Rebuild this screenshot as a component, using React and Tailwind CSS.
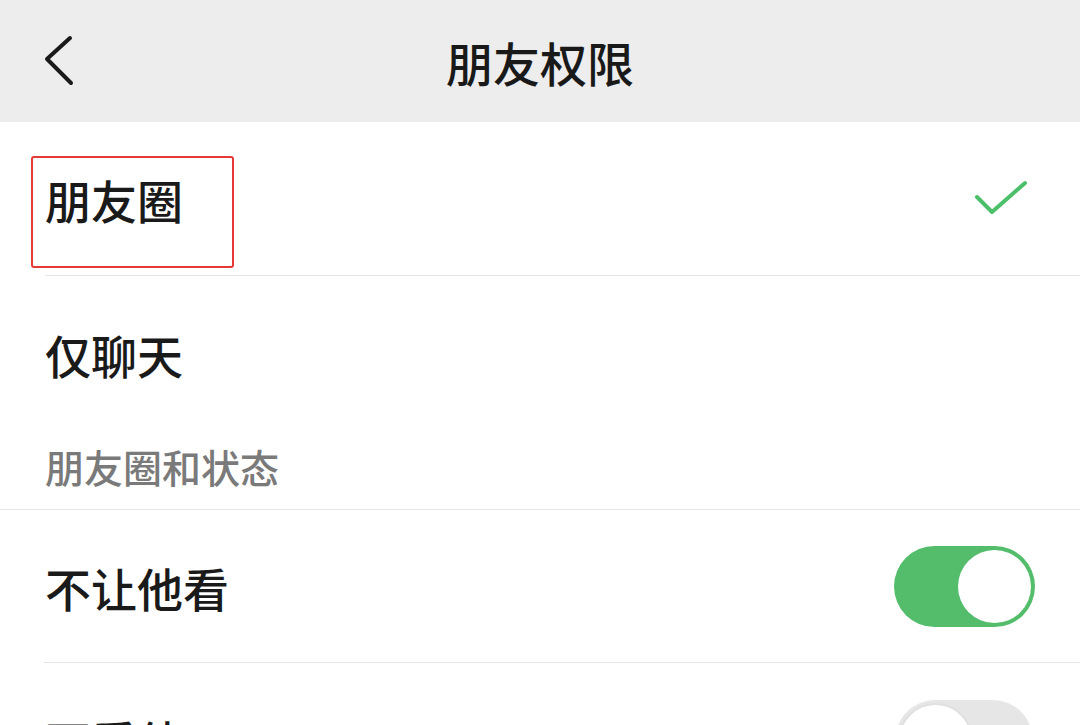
export default function App() {
  const font = { fontFamily: '"Noto Sans CJK SC", "Noto Sans", sans-serif' };

  return (
    <div className="w-[1080px] h-[725px] overflow-hidden bg-white" style={font}>
      <div className="relative flex h-[122px] items-center justify-center bg-[#ededed]">
        <button className="absolute left-[40px] top-[32px] flex h-[58px] w-[40px] items-center justify-center">
          <svg width="40" height="58" viewBox="0 0 40 58" fill="none">
            <path
              d="M30 6 L7 27 L31 51"
              stroke="#1a1a1a"
              strokeWidth="4"
              strokeLinecap="round"
              strokeLinejoin="round"
            />
          </svg>
        </button>
        <h1 className="text-[47px] font-medium leading-none text-[#191919]">朋友权限</h1>
      </div>

      <div className="relative flex h-[154px] items-center justify-between pl-[45px] pr-[52px]">
        <span className="text-[46px] font-medium leading-none text-[#1a1a1a]">朋友圈</span>
        <svg width="54" height="40" viewBox="0 0 54 40" fill="none">
          <path
            d="M3 18 L18 33 L51 4"
            stroke="#4cbf6a"
            strokeWidth="4"
            strokeLinecap="round"
            strokeLinejoin="round"
          />
        </svg>
        <div className="absolute left-[31px] top-[34px] h-[112px] w-[203px] rounded-[3px] border-[2.5px] border-[#e53935]" />
        <div className="absolute bottom-0 left-[45px] right-0 h-px bg-[#e5e5e5]" />
      </div>

      <div className="flex h-[156px] items-center pl-[45px]">
        <span className="text-[46px] font-medium leading-none text-[#1a1a1a]">仅聊天</span>
      </div>

      <div className="flex h-[77px] items-start pl-[45px] pt-[15px]">
        <span className="text-[39px] font-medium leading-none text-[#7a7a7a]">朋友圈和状态</span>
      </div>

      <div className="relative flex h-[154px] items-center justify-between border-t border-[#e5e5e5] pl-[45px] pr-[45px]">
        <span className="text-[46px] font-medium leading-none text-[#1a1a1a]">不让他看</span>
        <div className="flex h-[81px] w-[141px] items-center justify-end rounded-full bg-[#53bd6b] px-[4px]">
          <div className="h-[73px] w-[73px] rounded-full bg-white" />
        </div>
        <div className="absolute bottom-0 left-[44px] right-0 h-px bg-[#e5e5e5]" />
      </div>

      <div className="flex h-[154px] items-center justify-between pl-[45px] pr-[47px]">
        <span className="text-[46px] font-medium leading-none text-[#1a1a1a]">不看他</span>
        <div className="flex h-[81px] w-[138px] items-center justify-start rounded-full bg-[#e6e6e6] px-[3px]">
          <div className="h-[75px] w-[75px] rounded-full border-[2px] border-[#e0e0e0] bg-white" />
        </div>
      </div>
    </div>
  );
}
